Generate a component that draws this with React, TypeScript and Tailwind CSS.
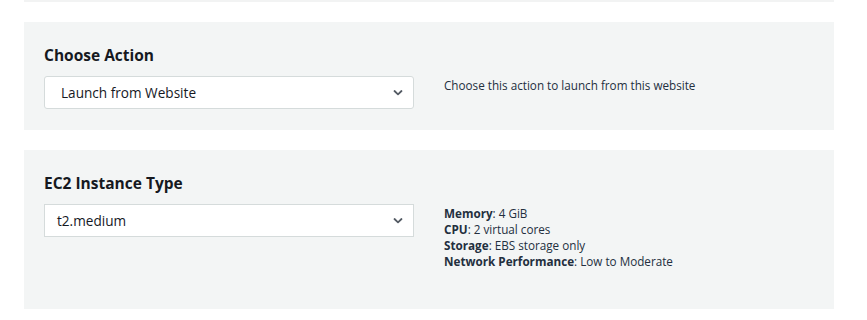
import React from "react";

function Chevron() {
  return (
    <svg width="10" height="7" viewBox="0 0 10 7" className="absolute right-[10px] top-1/2 -translate-y-1/2">
      <path d="M1.5 1.5 L5 4.8 L8.5 1.5" fill="none" stroke="#545b64" strokeWidth="1.8" strokeLinecap="round" strokeLinejoin="round" />
    </svg>
  );
}

function FakeSelect({ value, rounded, padLeft }: { value: string; rounded: boolean; padLeft: string }) {
  return (
    <div
      className={`relative w-[370px] h-[33px] bg-white border border-[#d5dbdb] flex items-center pt-[2px] text-[13.6px] text-[#16191f] ${
        rounded ? "rounded-[3px]" : ""
      } ${padLeft}`}
    >
      <span>{value}</span>
      <Chevron />
    </div>
  );
}

export default function App() {
  return (
    <div
      className="w-[867px] h-[320px] bg-white flex flex-col gap-5 pl-6 pr-[33px] overflow-hidden"
      style={{ fontFamily: '"Open Sans", "Noto Sans", sans-serif' }}
    >
      <div className="h-[2px] bg-[#f2f3f3]" />

      <div className="bg-[#f3f5f5] pt-[21px] pb-[21px] px-5">
        <h2 className="text-[15.5px] leading-6 font-bold text-[#16191f]">Choose Action</h2>
        <div className="mt-[9px] flex gap-[30px]">
          <FakeSelect value="Launch from Website" rounded padLeft="pl-[16px]" />
          <div className="text-[11.7px] leading-4 text-[#232f3e] pt-[1px]">
            Choose this action to launch from this website
          </div>
        </div>
      </div>

      <div className="bg-[#f3f5f5] pt-[21px] pb-[40px] px-5">
        <h2 className="text-[15.5px] leading-6 font-bold text-[#16191f]">EC2 Instance Type</h2>
        <div className="mt-[9px] flex gap-[30px]">
          <FakeSelect value="t2.medium" rounded={false} padLeft="pl-[12px]" />
          <div className="text-[11.7px] leading-4 text-[#232f3e] pt-[1px]">
            <div>
              <span className="font-bold">Memory</span>: 4 GiB
            </div>
            <div>
              <span className="font-bold">CPU</span>: 2 virtual cores
            </div>
            <div>
              <span className="font-bold">Storage</span>: EBS storage only
            </div>
            <div>
              <span className="font-bold">Network Performance</span>: Low to Moderate
            </div>
          </div>
        </div>
      </div>
    </div>
  );
}
